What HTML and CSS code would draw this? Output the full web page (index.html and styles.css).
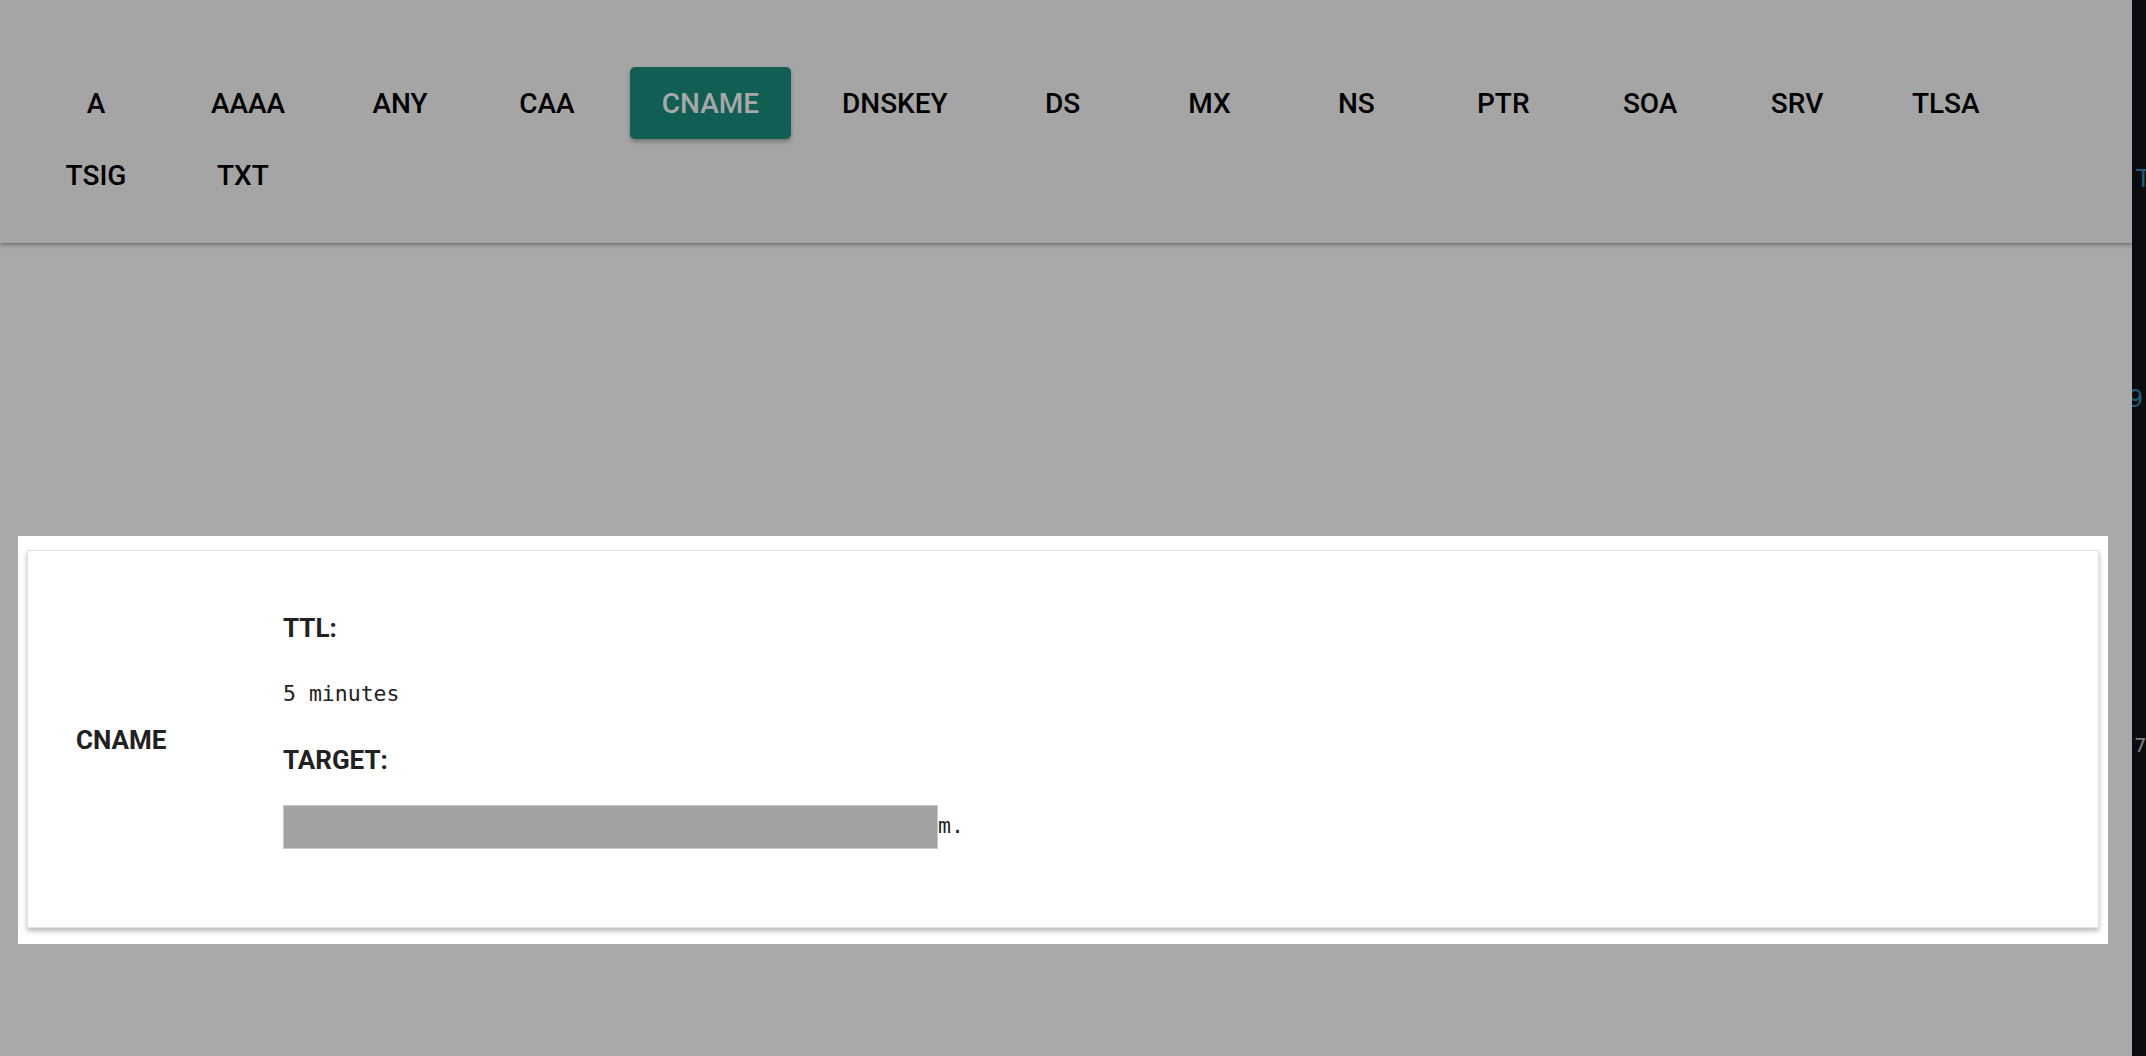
FILE: index.html
```html
<!DOCTYPE html>
<html lang="en">
<head>
    <meta charset="UTF-8">
    <title>DNS lookup</title>
    <link rel="stylesheet" href="styles.css">
</head>
<body>
    <div class="page">
        <div class="app">
            <header class="types">
                <nav class="type-list">
                    <button class="type-btn">A</button>
                    <button class="type-btn">AAAA</button>
                    <button class="type-btn">ANY</button>
                    <button class="type-btn">CAA</button>
                    <button class="type-btn active">CNAME</button>
                    <button class="type-btn">DNSKEY</button>
                    <button class="type-btn">DS</button>
                    <button class="type-btn">MX</button>
                    <button class="type-btn">NS</button>
                    <button class="type-btn">PTR</button>
                    <button class="type-btn">SOA</button>
                    <button class="type-btn">SRV</button>
                    <button class="type-btn">TLSA</button>
                    <button class="type-btn">TSIG</button>
                    <button class="type-btn">TXT</button>
                </nav>
            </header>

            <main class="results">
                <div class="spotlight">
                    <section class="record">
                        <div class="record-type">CNAME</div>
                        <dl class="record-fields">
                            <dt>TTL:</dt>
                            <dd>5 minutes</dd>
                            <dt>TARGET:</dt>
                            <dd><span class="redacted"></span>m.</dd>
                        </dl>
                    </section>
                </div>
            </main>
        </div>

        <!-- edge of the neighbouring panel -->
        <aside class="side-pane">
            <span class="pane-glyph blue first">T</span>
            <span class="pane-glyph blue second">9</span>
            <span class="pane-glyph grey third">7</span>
        </aside>
    </div>
</body>
</html>
```

FILE: styles.css
```css
html, body { margin: 0; height: 100%; }
body { background: #a9a9a9; font-family: Roboto, "Liberation Sans", sans-serif; overflow: hidden; }

.page { display: flex; height: 100%; }
.app { flex: 1; min-width: 0; }

/* record type picker */
.types {
    background: #a5a5a5;
    height: 243px;
    box-sizing: border-box;
    padding: 67px 32px 0 32px;
    box-shadow: 0 2px 4px rgba(0, 0, 0, 0.35);
    position: relative;
}
.type-list { display: flex; flex-wrap: wrap; column-gap: 18.9px; row-gap: 0; }
.type-btn {
    min-width: 128px;
    height: 72px;
    padding: 0 32px;
    border: none;
    border-radius: 5px;
    background: transparent;
    color: #000;
    font-family: Roboto, "Liberation Sans", sans-serif;
    font-weight: 500;
    font-size: 28px;
    cursor: pointer;
}
.type-btn.active {
    background: #115e54;
    color: #a8a8a8;
    box-shadow: 0 3px 4px rgba(0, 0, 0, 0.28);
}

/* result card */
.results { padding: 293px 24px 0 18px; }
.spotlight { background: #fff; padding: 14px 9px 16px 9px; }
.record {
    display: flex;
    align-items: center;
    background: #fff;
    border: 1px solid #e2e2e2;
    box-shadow: 0 3px 5px rgba(0, 0, 0, 0.28);
    padding: 1px 48px 0 48px;
    height: 378px;
    box-sizing: border-box;
}
.record-type { flex: none; width: 207px; font-weight: 700; font-size: 26px; color: #212121; }
.record-fields { margin: 0; padding: 0 0 26px 0; }
.record-fields dt { font-weight: 700; font-size: 26px; color: #212121; line-height: 66px; height: 66px; }
.record-fields dd {
    margin: 0;
    font-family: "DejaVu Sans Mono", "Liberation Mono", monospace;
    font-size: 21.5px;
    color: #222;
    line-height: 66px;
    height: 66px;
}
.redacted {
    display: inline-block;
    width: 655px;
    height: 44px;
    box-sizing: border-box;
    background: #a2a2a2;
    border: 1px solid #c9c9c9;
    vertical-align: middle;
}

.side-pane {
    flex: none;
    width: 14px;
    background: #0b0c0f;
    overflow: hidden;
    display: flex;
    flex-direction: column;
    font-family: "DejaVu Sans", sans-serif;
    font-size: 24px;
    line-height: 26px;
}
.pane-glyph { display: block; margin-left: 4px; }
.pane-glyph.blue { color: #1d5a78; }
.pane-glyph.grey { color: #7c7c7c; font-size: 20px; }
.pane-glyph.first { margin-top: 166px; }
.pane-glyph.second { margin-top: 194px; margin-left: -4px; }
.pane-glyph.third { margin-top: 320px; margin-left: 2px; }
```
